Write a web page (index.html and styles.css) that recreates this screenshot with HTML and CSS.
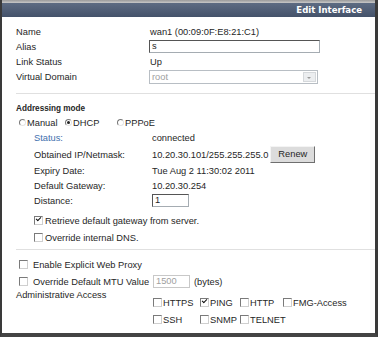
FILE: index.html
```html
<!DOCTYPE html>
<html lang="en">
<head>
  <meta charset="UTF-8">
  <title>Edit Interface</title>
  <link rel="stylesheet" href="styles.css">
</head>
<body>
  <div class="window">
    <div class="top-strip"></div>
    <div class="title-bar">Edit Interface</div>

    <div class="content">
      <!-- General info -->
      <div class="row r-name"><span class="label">Name</span><span>wan1 (00:09:0F:E8:21:C1)</span></div>
      <div class="row r-alias"><span class="label">Alias</span><span class="text-input alias-input">s</span></div>
      <div class="row r-link"><span class="label">Link Status</span><span>Up</span></div>
      <div class="row r-vdom"><span class="label">Virtual Domain</span>
        <span class="select"><span class="select-text">root</span><span class="select-arrow"></span></span>
      </div>

      <div class="separator sep-1"></div>

      <!-- Addressing mode -->
      <div class="section-title">Addressing mode</div>
      <div class="radio-row">
        <span class="radio-opt opt-manual"><span class="radio"></span>Manual</span>
        <span class="radio-opt opt-dhcp"><span class="radio checked"></span>DHCP</span>
        <span class="radio-opt"><span class="radio"></span>PPPoE</span>
      </div>

      <div class="dhcp">
        <div class="drow d-status"><span class="dlabel status">Status:</span><span>connected</span></div>
        <div class="drow d-ip"><span class="dlabel">Obtained IP/Netmask:</span><span>10.20.30.101/255.255.255.0</span><span class="btn">Renew</span></div>
        <div class="drow d-expiry"><span class="dlabel">Expiry Date:</span><span>Tue Aug 2 11:30:02 2011</span></div>
        <div class="drow d-gw"><span class="dlabel">Default Gateway:</span><span>10.20.30.254</span></div>
        <div class="drow d-dist"><span class="dlabel">Distance:</span><span class="text-input dist-input">1</span></div>
        <div class="check-row c-retrieve"><span class="checkbox checked"></span>Retrieve default gateway from server.</div>
        <div class="check-row c-dns"><span class="checkbox"></span>Override internal DNS.</div>
      </div>

      <div class="separator sep-2"></div>

      <div class="check-row c-proxy"><span class="checkbox"></span>Enable Explicit Web Proxy</div>
      <div class="check-row c-mtu"><span class="checkbox"></span><span class="mtu-label">Override Default MTU Value</span><span class="text-input mtu-input">1500</span><span class="bytes">(bytes)</span></div>

      <div class="access">
        <span class="access-label">Administrative Access</span>
        <div class="access-grid">
          <span class="opt"><span class="checkbox"></span>HTTPS</span>
          <span class="opt"><span class="checkbox checked"></span>PING</span>
          <span class="opt"><span class="checkbox"></span>HTTP</span>
          <span class="opt"><span class="checkbox"></span>FMG-Access</span>
          <span class="opt"><span class="checkbox"></span>SSH</span>
          <span class="opt"><span class="checkbox"></span>SNMP</span>
          <span class="opt"><span class="checkbox"></span>TELNET</span>
        </div>
      </div>
    </div>
  </div>
</body>
</html>
```

FILE: styles.css
```css
body {
  margin: 0;
  font-family: "Liberation Sans", Arial, sans-serif;
  font-size: 9.3px;
  color: #262626;
  background: #fff;
}
.window {
  width: 378px;
  height: 337px;
  box-sizing: border-box;
  border-left: 2px solid #3a3a3a;
  border-right: 3px solid #3a3a3a;
  border-bottom: 4px solid #444;
  overflow: hidden;
  white-space: nowrap;
}
.top-strip {
  height: 3px;
  background: linear-gradient(#9a9a9a, #c8c8c8);
}
.title-bar {
  height: 14px;
  line-height: 14px;
  background: linear-gradient(#5d6b82, #44526a);
  color: #fff;
  font-family: "DejaVu Sans Condensed", "DejaVu Sans", sans-serif;
  font-size: 9.5px;
  font-weight: bold;
  text-align: right;
  padding-right: 13px;
}
.content {
  padding-left: 14px;
}
.row {
  display: flex;
  align-items: center;
  height: 15px;
}
.r-name {
  margin-top: 7px;
}
.label {
  width: 134px;
  flex: none;
}
.text-input {
  display: inline-block;
  box-sizing: border-box;
  height: 13px;
  line-height: 11px;
  border: 1px solid #a5acb2;
  border-top-color: #555;
  border-left-color: #555;
  padding-left: 2px;
  background: #fff;
}
.alias-input {
  width: 171px;
  margin-left: -1px;
}
.select {
  display: flex;
  box-sizing: border-box;
  width: 169px;
  height: 14px;
  margin-left: -1px;
  border: 1px solid #b8bec4;
  color: #a0a0a0;
}
.select-text {
  flex: 1;
  padding-left: 2px;
  line-height: 12px;
}
.select-arrow {
  width: 11px;
  margin: 1px;
  background: #eceef0;
  border: 1px solid #d5d8db;
  position: relative;
}
.select-arrow::after {
  content: "";
  position: absolute;
  left: 3px;
  top: 4px;
  border-left: 2px solid transparent;
  border-right: 2px solid transparent;
  border-top: 2px solid #999;
}
.separator {
  height: 1px;
  background: #e0e0e0;
}
.sep-1 {
  margin-top: 9px;
}
.section-title {
  font-size: 8.2px;
  font-weight: bold;
  margin-top: 8px;
  height: 13px;
  line-height: 13px;
}
.radio-row {
  display: flex;
  align-items: center;
  height: 15px;
  padding-left: 3px;
}
.radio-opt {
  display: flex;
  align-items: center;
}
.opt-manual {
  width: 46px;
}
.opt-dhcp {
  width: 52px;
}
.radio {
  width: 7px;
  height: 7px;
  box-sizing: border-box;
  border-radius: 50%;
  border: 1px solid #777;
  border-bottom-color: #e4e4e4;
  border-right-color: #e4e4e4;
  margin-right: 1px;
  position: relative;
}
.radio.checked::after {
  content: "";
  position: absolute;
  left: 1px;
  top: 1px;
  width: 3px;
  height: 3px;
  border-radius: 50%;
  background: #222;
}
.dhcp {
  padding-left: 18px;
}
.drow {
  display: flex;
  align-items: center;
}
.dlabel {
  width: 118px;
  flex: none;
}
.status {
  color: #3f6fae;
}
.d-status {
  height: 16px;
}
.d-ip {
  height: 17px;
}
.btn {
  display: inline-block;
  margin-left: 2px;
  padding: 0 7px;
  height: 17px;
  line-height: 15px;
  box-sizing: border-box;
  background: #dcdcdc;
  border: 1px solid #f4f4f4;
  border-right-color: #6f6f6f;
  border-bottom-color: #6f6f6f;
}
.d-expiry {
  height: 16px;
}
.d-gw {
  height: 14px;
}
.d-dist {
  height: 15px;
}
.dist-input {
  width: 37px;
}
.check-row {
  display: flex;
  align-items: center;
  height: 17px;
}
.c-retrieve {
  margin-top: 4px;
}
.checkbox {
  display: inline-block;
  width: 9px;
  height: 9px;
  box-sizing: border-box;
  border: 1px solid #7a7a7a;
  border-bottom-color: #cfcfcf;
  border-right-color: #cfcfcf;
  margin-right: 1px;
  position: relative;
  flex: none;
}
.checkbox.checked::after {
  content: "";
  position: absolute;
  left: 1px;
  top: 0;
  width: 4px;
  height: 2px;
  border-left: 1.5px solid #111;
  border-bottom: 1.5px solid #111;
  transform: rotate(-45deg);
}
.dhcp .checkbox {
  margin-right: 2px;
}
.sep-2 {
  margin-top: 3px;
}
.c-proxy {
  margin-top: 6px;
}
.c-proxy,
.c-mtu {
  padding-left: 3px;
}
.c-proxy .checkbox,
.c-mtu .checkbox {
  margin-right: 5px;
}
.mtu-label {
  width: 120px;
}
.mtu-input {
  width: 37px;
  color: #a0a0a0;
  border-color: #c8c8c8;
}
.bytes {
  margin-left: 4px;
}
.access {
  display: flex;
}
.access-label {
  width: 137px;
  flex: none;
  line-height: 11px;
}
.access-grid {
  display: grid;
  grid-template-columns: 47px 40px 43px auto;
  grid-auto-rows: 17px;
  margin-top: 4px;
}
.opt {
  display: flex;
  align-items: center;
}
```
